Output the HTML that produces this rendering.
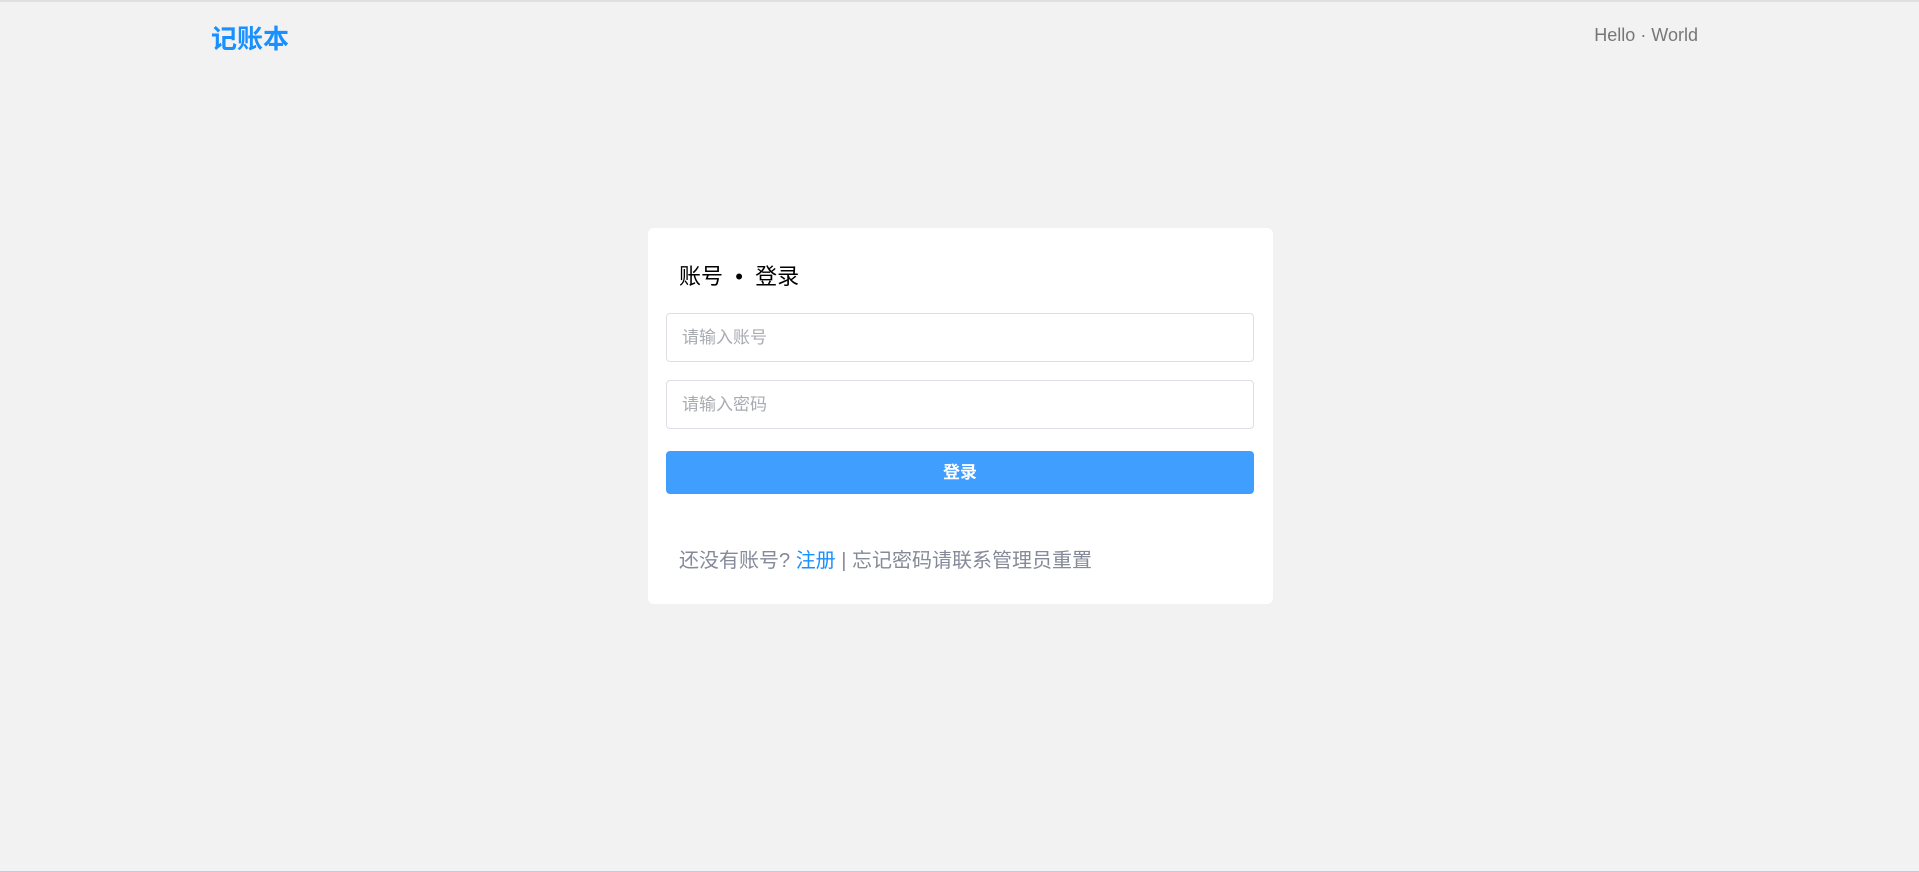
<!DOCTYPE html>
<html><head><meta charset="utf-8"><style>
*{box-sizing:border-box;margin:0;padding:0}
body{width:1919px;height:872px;background:#f2f2f2;font-family:"Liberation Sans","Noto Sans CJK SC",sans-serif;position:relative;overflow:hidden;border-top:2px solid #e0e0e0}
.logo{position:absolute;left:211px;top:17px;font-size:26px;font-weight:bold;color:#1890ff}
.hw{position:absolute;right:221px;top:23px;font-size:18px;color:#777}
.card{position:absolute;left:648px;top:226px;width:625px;height:376px;background:#fff;border-radius:6px}
.title{position:absolute;left:31px;top:34px;font-size:22px;line-height:30px;color:#000;white-space:pre}
.inp{position:absolute;left:18px;width:588px;height:49px;border:1px solid #dcdfe6;border-radius:4px;font-size:17px;color:#a8abb2;padding-left:15px;line-height:47px}
.btn{position:absolute;left:18px;top:223px;width:588px;height:43px;background:#409eff;border-radius:4px;color:#fff;font-size:17px;font-weight:bold;text-align:center;line-height:43px}
.foot{position:absolute;left:31px;top:319px;font-size:20px;line-height:28px;color:#858a99;white-space:pre}
.foot a{color:#1890ff;text-decoration:none}
.bl{position:absolute;left:0;bottom:0;width:100%;height:1px;background:#c8c8e0}
</style></head><body>
<div class="logo">记账本</div>
<div class="hw">Hello · World</div>
<div class="card">
<div class="title">账号  •  登录</div>
<div class="inp" style="top:85px">请输入账号</div>
<div class="inp" style="top:152px">请输入密码</div>
<div class="btn">登录</div>
<div class="foot">还没有账号? <a>注册</a> | 忘记密码请联系管理员重置</div>
</div>
<div class="bl"></div>
</body></html>
